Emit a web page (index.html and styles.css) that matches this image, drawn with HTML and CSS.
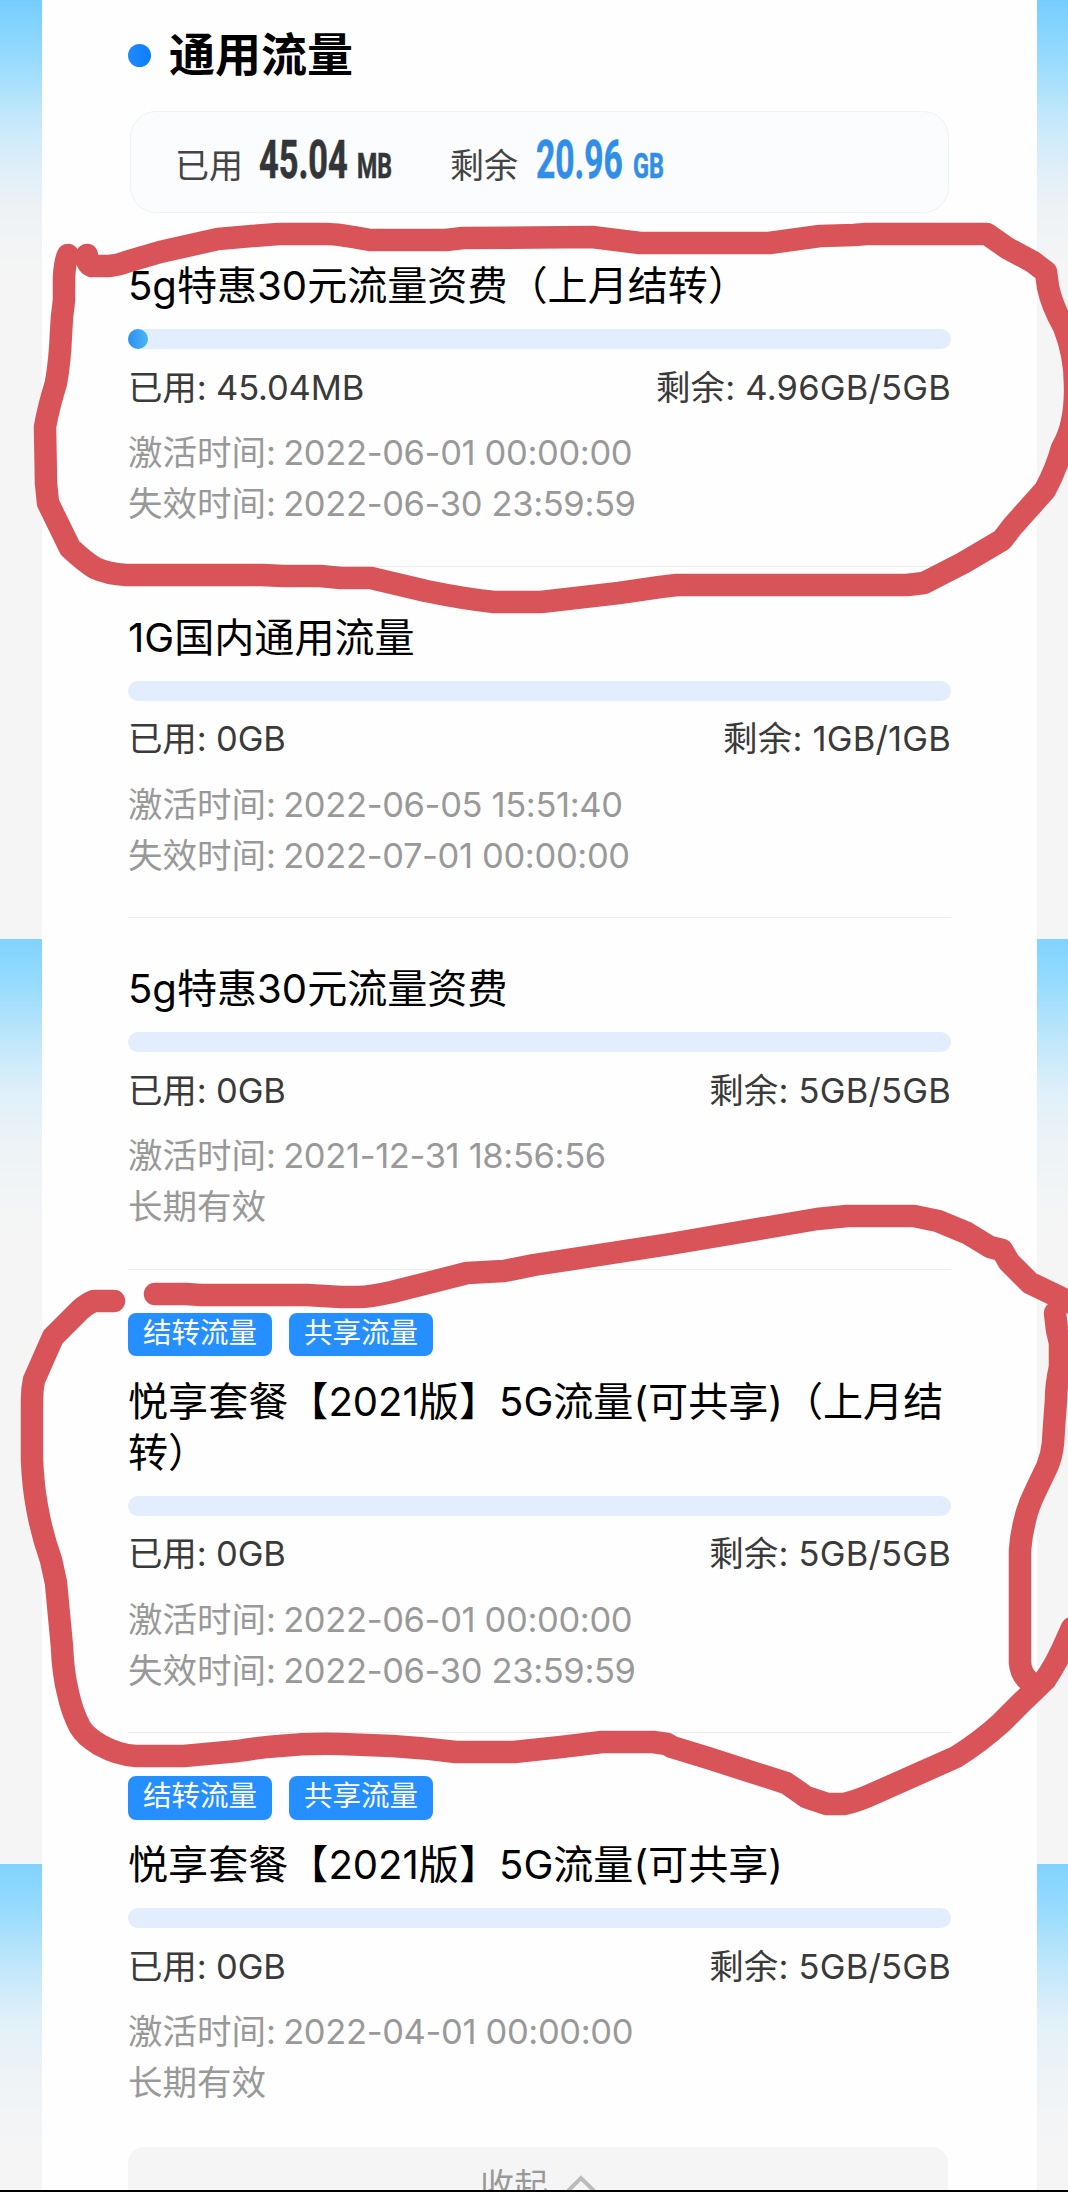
FILE: index.html
```html
<!DOCTYPE html>
<html lang="zh-CN">
    <head>
        <meta charset="utf-8">
        <title>通用流量</title>
        <link rel="stylesheet" href="styles.css">
    </head>
    <body>
        <main class="page">
            <div class="card">
                <h1 class="heading"><span class="dot"></span>通用流量</h1>
                <div class="summary">
                    <span class="label">已用</span>
                    <svg class="figure used-figure" width="134" height="70" viewBox="0 0 134 70">
                        <text class="number" transform="translate(0 52) scale(.648 1)">45.04</text>
                        <text class="unit" transform="translate(98 52) scale(.66 1)">MB</text>
                    </svg>
                    <span class="label">剩余</span>
                    <svg class="figure left-figure" width="134" height="70" viewBox="0 0 134 70">
                        <text class="number" transform="translate(0 52) scale(.634 1)">20.96</text>
                        <text class="unit" transform="translate(97 52) scale(.67 1)">GB</text>
                    </svg>
                </div>

                <section class="item">
                    <h2>5g特惠30元流量资费（上月结转）</h2>
                    <div class="bar"><div class="fill"></div></div>
                    <div class="usage"><span>已用: 45.04MB</span><span class="rest">剩余: 4.96GB/5GB</span></div>
                    <p>激活时间: <span class="time">2022-06-01 00:00:00</span></p>
                    <p>失效时间: <span class="time">2022-06-30 23:59:59</span></p>
                </section>
                <section class="item">
                    <h2>1G国内通用流量</h2>
                    <div class="bar"></div>
                    <div class="usage"><span>已用: 0GB</span><span class="rest">剩余: 1GB/1GB</span></div>
                    <p>激活时间: <span class="time">2022-06-05 15:51:40</span></p>
                    <p>失效时间: <span class="time">2022-07-01 00:00:00</span></p>
                </section>
                <section class="item">
                    <h2>5g特惠30元流量资费</h2>
                    <div class="bar"></div>
                    <div class="usage"><span>已用: 0GB</span><span class="rest">剩余: 5GB/5GB</span></div>
                    <p>激活时间: <span class="time">2021-12-31 18:56:56</span></p>
                    <p>长期有效</p>
                </section>
                <section class="item">
                    <div class="tags"><span>结转流量</span><span>共享流量</span></div>
                    <h2>悦享套餐【2021版】5G流量(可共享)（上月结<br>转）</h2>
                    <div class="bar"></div>
                    <div class="usage"><span>已用: 0GB</span><span class="rest">剩余: 5GB/5GB</span></div>
                    <p>激活时间: <span class="time">2022-06-01 00:00:00</span></p>
                    <p>失效时间: <span class="time">2022-06-30 23:59:59</span></p>
                </section>
                <section class="item">
                    <div class="tags"><span>结转流量</span><span>共享流量</span></div>
                    <h2>悦享套餐【2021版】5G流量(可共享)</h2>
                    <div class="bar"></div>
                    <div class="usage"><span>已用: 0GB</span><span class="rest">剩余: 5GB/5GB</span></div>
                    <p>激活时间: <span class="time">2022-04-01 00:00:00</span></p>
                    <p>长期有效</p>
                </section>

                <div class="collapse">
                    <span>收起</span>
                    <svg width="30" height="18" viewBox="0 0 30 18"><path d="M2 16 15 3l13 13" /></svg>
                </div>
            </div>

            <!-- red pen marks -->
            <svg class="marks" width="1068" height="2190" viewBox="0 0 1068 2190">
                <path d="M87 255Q86 264 92 266L109 266Q119 265 126 262L160 252 218 239 252 236 279 234H327Q338 234 370 240H446L463 238 592 237 640 243H769L820 236 854 235 866 234H987L1007 248 1033 262 1046 272 1048 287Q1052 306 1064 327Q1075 355 1075 385Q1076 425 1062 448Q1056 470 1045 490L1012 527 1002 540 963 563 924 583 907 585H677L660 587 619 593 541 602H494Q465 599 426 591L371 578H341L320 576H283L262 575H126Q108 574 95 568Q85 562 70 548L48 503 46 483 45 427Q48 409 56 383Q60 360 61 333L62 317 64 300V277Q65 261 68 255" />
                <path d="M155 1294H186L201 1295H307L341 1297H358Q370 1297 392 1292L467 1273 504 1271 534 1265 670 1244 817 1219 847 1216H914L938 1221 967 1233 990 1247 1002 1250 1009 1262 1030 1283 1055 1295 1076 1305" />
                <path d="M1055 1313 1057 1330 1060 1343V1367Q1056 1385 1056 1400L1054 1427 1053 1443Q1052 1455 1047 1467L1036 1490Q1028 1506 1025 1520 1021 1535 1020 1550V1663Q1021 1674 1028 1680" />
                <path d="M114 1301H94Q88 1303 80 1310 70 1320 53 1337L34 1380Q32 1389 32 1400V1460Q33 1485 37 1507 42 1535 51 1560L56 1583 62 1647Q63 1673 68 1693 72 1712 80 1727 85 1736 100 1745 118 1755 136 1756H184L238 1751Q262 1747 279 1746 310 1743 341 1744L392 1746Q425 1748 456 1752H514L561 1747 602 1742H653L667 1744 672 1747 708 1758 786 1783Q795 1789 806 1797L827 1804H844Q858 1801 875 1793L956 1757Q980 1742 1001 1723L1021 1703 1045 1680Q1054 1667 1062 1650L1072 1628" />
            </svg>
        </main>
    </body>
</html>
```
FILE: styles.css
```css
body {
    margin: 0;
    font-family: Inter, "Noto Sans CJK SC", sans-serif;
    color: #000;
}
.page {
    position: relative;
    box-sizing: border-box;
    height: 2192px;
    padding: 0 31px 0 42px;
    overflow: hidden;
    border-bottom: 2px solid #000;
    background:
        linear-gradient(#75cdff, #98dbfe 60px, #c5e8fa 120px, #e0eef8 170px, #eef2f5 210px, #f5f5f5 270px) 0 0 / 100% 939px no-repeat,
        linear-gradient(#80d3ff, #97dbfe 45px, #c2e7fa 105px, #e0f0f9 155px, #eef3f6 210px, #f5f5f5 285px) 0 939px / 100% 925px repeat-y;
}
.card {
    height: 2190px;
    padding: 0 86px;
    background: #fefefe;
}
h1, h2, p {
    margin: 0;
    font-weight: 400;
}
.heading {
    display: flex;
    align-items: center;
    box-sizing: border-box;
    height: 111px;
    padding-bottom: 9px;
    font-size: 46px;
    font-weight: 700;
}
.dot {
    width: 23px;
    height: 23px;
    margin: 9px 18px 0 0;
    border-radius: 50%;
    background: linear-gradient(90deg, #1e8af9, #0c7dff);
}

/* totals */
.summary {
    display: flex;
    align-items: center;
    box-sizing: border-box;
    height: 102px;
    margin: 0 2px 2px;
    padding-left: 44px;
    border: 1px solid #f0f2f4;
    border-radius: 26px;
    background: #fbfcfe;
}
.label {
    width: 68px;
    margin-top: 2px;
    font-size: 34px;
    color: #444;
    white-space: nowrap;
}
.figure {
    font-family: Roboto, sans-serif;
    font-weight: 700;
    fill: #333638;
    stroke: #333638;
    stroke-width: .6;
}
.used-figure {
    margin: -3px 57px 0 16px;
}
.left-figure {
    margin: -3px 0 0 18px;
    fill: #318ee8;
    stroke: #318ee8;
}
.number {
    font-size: 53px;
}
.unit {
    font-size: 35px;
}

/* one data package */
.item {
    padding: 44px 0 36.5px;
    border-bottom: 1px solid #ececec;
}
.item:last-of-type {
    border-bottom: none;
}
.item h2 {
    padding-top: 1px;
    font-size: 40.1px;
    line-height: 51px;
    white-space: nowrap;
}
.tags {
    display: flex;
    gap: 17px;
    margin: -1px 0 18.5px;
}
.tags span {
    box-sizing: border-box;
    width: 144px;
    height: 43.5px;
    border-radius: 8px;
    background: #268fff;
    color: #fff;
    font-size: 28.5px;
    line-height: 40px;
    text-align: center;
}
.bar {
    height: 20px;
    margin-top: 18px;
    border-radius: 10px;
    background: #e2edfd;
}
.fill {
    width: 20px;
    height: 20px;
    border-radius: 10px;
    background: linear-gradient(90deg, #2f8ff0, #47b6fa);
}
.usage {
    display: flex;
    justify-content: space-between;
    margin: 12.5px 0 14.5px;
    font-size: 34.5px;
    line-height: 51px;
    letter-spacing: -.15px;
    color: #3a3a3a;
}
.rest {
    letter-spacing: .2px;
}
.item p {
    font-size: 34.5px;
    line-height: 51px;
    color: #999;
}
.time {
    margin-left: -2.5px;
    letter-spacing: -.35px;
}

.collapse {
    display: flex;
    justify-content: center;
    gap: 18px;
    height: 70px;
    margin: 2px 3px 0 0;
    padding-top: 13px;
    border-radius: 16px;
    background: #f5f5f5;
    font-size: 34px;
    line-height: 51px;
    color: #999;
}
.collapse svg {
    margin-top: 15px;
    fill: none;
    stroke: #bbb;
    stroke-width: 4;
}
.marks {
    position: absolute;
    top: 0;
    left: 0;
    fill: none;
    stroke: #d95459;
    stroke-width: 22.5;
    stroke-linecap: round;
    stroke-linejoin: round;
}
```
